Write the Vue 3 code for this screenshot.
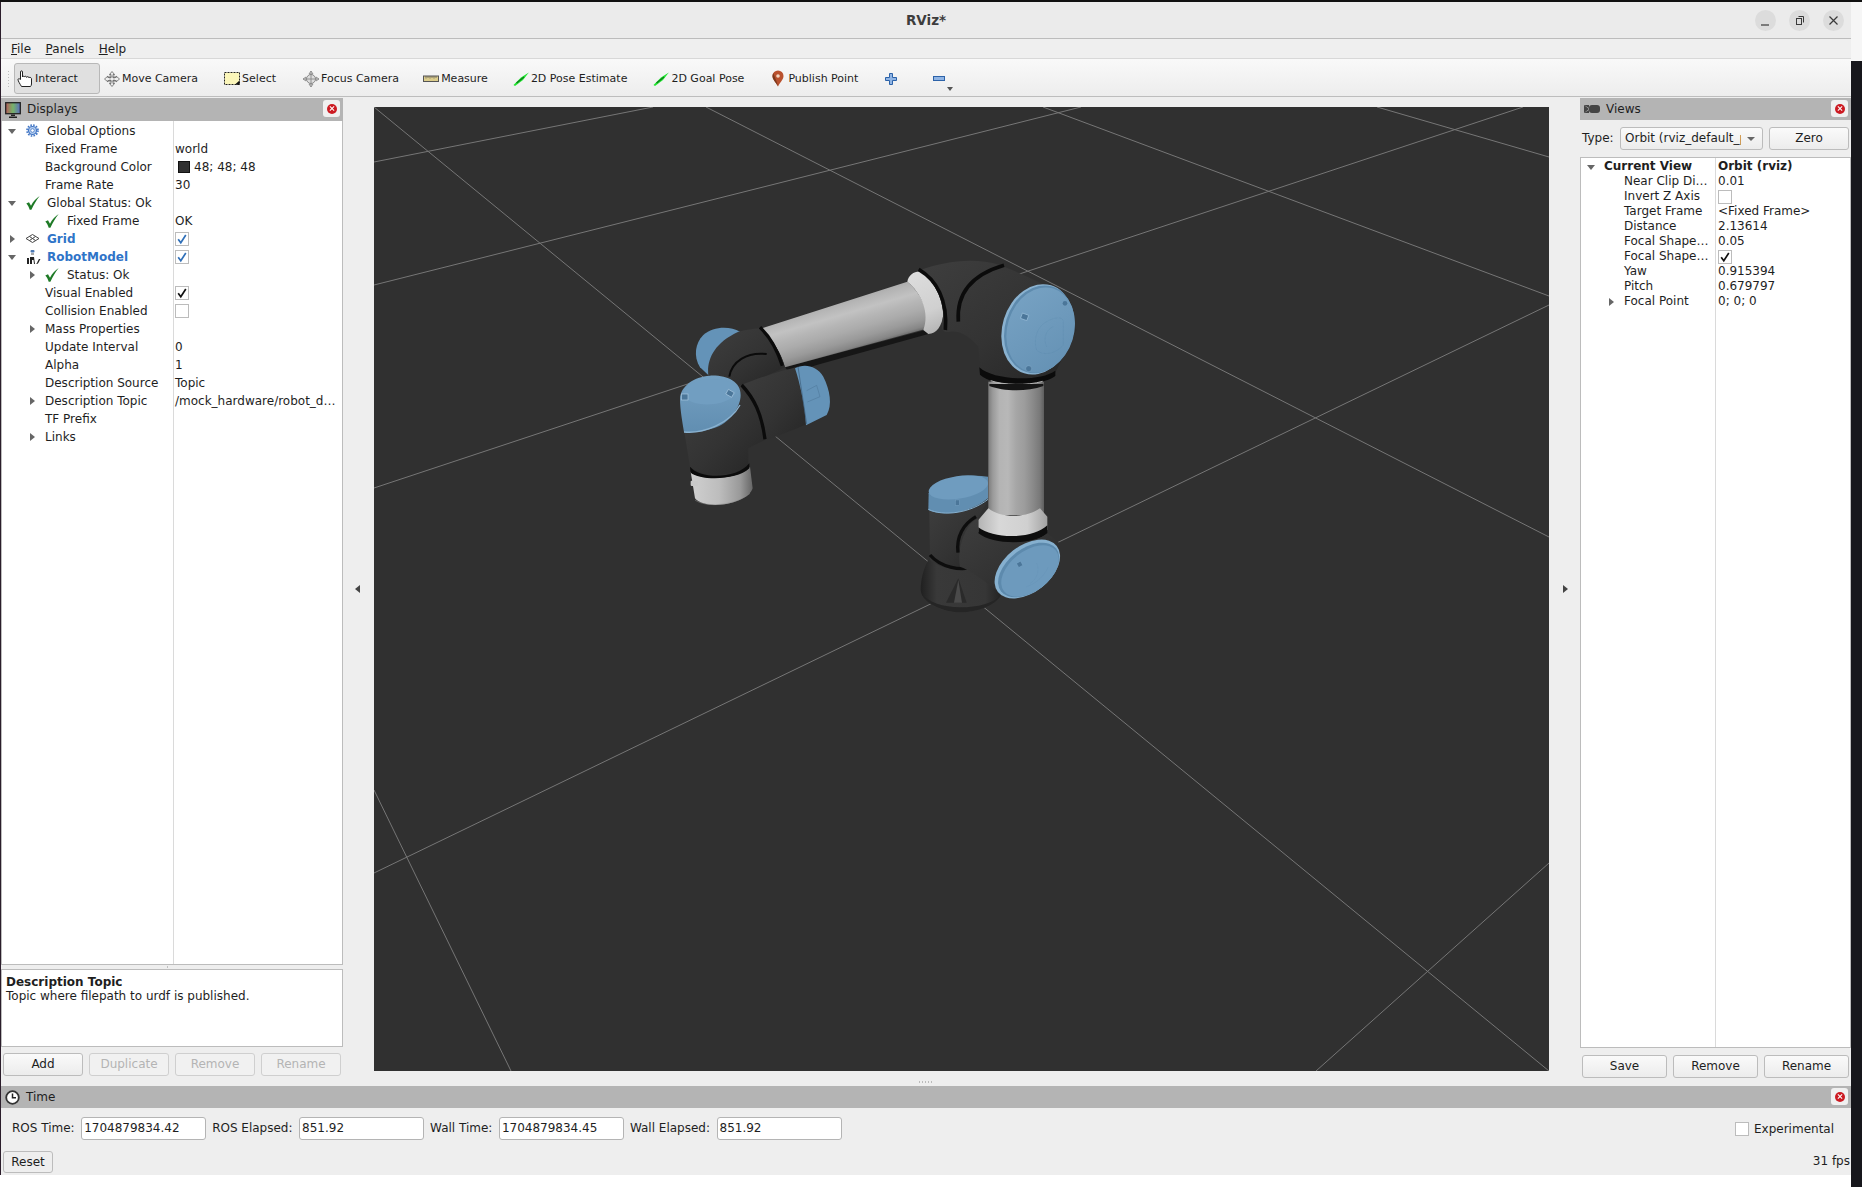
<script setup>
const displayRows = [
  { level: 0, chev: 'down', icon: 'gear', label: 'Global Options' },
  { level: 1, label: 'Fixed Frame', value: 'world' },
  { level: 1, label: 'Background Color', swatch: true, value: '48; 48; 48' },
  { level: 1, label: 'Frame Rate', value: '30' },
  { level: 0, chev: 'down', icon: 'check', label: 'Global Status: Ok' },
  { level: 1, icon: 'check', label: 'Fixed Frame', value: 'OK' },
  { level: 0, chev: 'right', icon: 'grid', label: 'Grid', blue: true, box: 'blue' },
  { level: 0, chev: 'down', icon: 'robot', label: 'RobotModel', blue: true, box: 'blue' },
  { level: 1, chev: 'right', icon: 'check', label: 'Status: Ok' },
  { level: 1, label: 'Visual Enabled', box: 'black' },
  { level: 1, label: 'Collision Enabled', box: 'empty' },
  { level: 1, chev: 'right', label: 'Mass Properties' },
  { level: 1, label: 'Update Interval', value: '0' },
  { level: 1, label: 'Alpha', value: '1' },
  { level: 1, label: 'Description Source', value: 'Topic' },
  { level: 1, chev: 'right', label: 'Description Topic', value: '/mock_hardware/robot_d…' },
  { level: 1, label: 'TF Prefix' },
  { level: 1, chev: 'right', label: 'Links' },
]
const viewRows = [
  { level: 0, chev: 'down', label: 'Current View', value: 'Orbit (rviz)', bold: true },
  { level: 1, label: 'Near Clip Di…', value: '0.01' },
  { level: 1, label: 'Invert Z Axis', box: 'empty' },
  { level: 1, label: 'Target Frame', value: '<Fixed Frame>' },
  { level: 1, label: 'Distance', value: '2.13614' },
  { level: 1, label: 'Focal Shape…', value: '0.05' },
  { level: 1, label: 'Focal Shape…', box: 'black' },
  { level: 1, label: 'Yaw', value: '0.915394' },
  { level: 1, label: 'Pitch', value: '0.679797' },
  { level: 1, chev: 'right', label: 'Focal Point', value: '0; 0; 0' },
]
const gridLines = [
  [374, 107, 1549, 1071],
  [706, 107, 1549, 537],
  [1043, 107, 1549, 296],
  [1377, 107, 1549, 157],
  [374, 790, 511, 1071],
  [374, 162, 653, 107],
  [374, 285, 1081, 107],
  [374, 488, 1523, 107],
  [374, 873, 1549, 305],
  [1316, 1071, 1549, 863],
]
const timeFields = [
  { label: 'ROS Time:', value: '1704879834.42' },
  { label: 'ROS Elapsed:', value: '851.92' },
  { label: 'Wall Time:', value: '1704879834.45' },
  { label: 'Wall Elapsed:', value: '851.92' },
]
</script>

<template>
  <div class="screen">
    <div class="topline"></div>
    <div class="desk">
      <div class="window">
        <header class="titlebar">
          <span class="title">RViz*</span>
          <div class="winbtns">
            <span class="winbtn"><svg width="21" height="21" viewBox="0 0 21 21"><path d="M6 15h8" stroke="#3a3a3a" stroke-width="1.2"/></svg></span>
            <span class="winbtn"><svg width="21" height="21" viewBox="0 0 21 21" fill="none" stroke="#3a3a3a"><rect x="7.5" y="8.5" width="5" height="6"/><path d="M9.5 6.5h5v6"/></svg></span>
            <span class="winbtn"><svg width="21" height="21" viewBox="0 0 21 21"><path d="M6.5 6.5l8 8M14.5 6.5l-8 8" stroke="#3a3a3a" stroke-width="1.2"/></svg></span>
          </div>
        </header>
        <nav class="menubar">
          <span><u>F</u>ile</span>
          <span><u>P</u>anels</span>
          <span><u>H</u>elp</span>
        </nav>
        <div class="toolbar">
          <span class="grip"></span>
          <div class="tool active">
            <svg width="16" height="18" viewBox="0 0 16 18" fill="#fff" stroke="#222" stroke-width="1"><path d="M4.5 16.5C3 14 1 11 1 9.5c0-1 1.5-1 2.5 0V2c0-1.6 2-1.6 2 0v5c0-1 2-1 2 0 0-1 2-1 2 .3 0-1 2.5-.8 2.5.5 0-.8 2.5-.6 2.5 1V14c0 1-.5 2-1 2.5z"/></svg>
            <span>Interact</span>
          </div>
          <div class="tool first">
            <svg width="16" height="16" viewBox="0 0 16 16" fill="#eee" stroke="#666" stroke-width=".8"><path d="M8 .5l2.5 3H9v3h3V5l3.5 3-3.500 3V9.500H9v3h1.500L8 15.500l-2.500-3H7v-3H4V11L.5 8 4 5v1.500h3v-3H5.500z"/><path d="M3 6h10M3 10h10M6 3v10M10 3v10" stroke-width=".5"/></svg>
            <span>Move Camera</span>
          </div>
          <div class="tool">
            <svg width="16" height="16" viewBox="0 0 16 16"><rect x=".5" y="1.500" width="15" height="12" fill="#fbf6ba" stroke="#222" stroke-dasharray="2 1"/><path d="M11 13.500l4.500-4v4.500z" fill="#111"/></svg>
            <span>Select</span>
          </div>
          <div class="tool focus">
            <svg width="18" height="18" viewBox="0 0 18 18" fill="none" stroke="#8b8b8b"><circle cx="9" cy="9" r="4.500" fill="#ddd"/><path d="M9 1v16M1 9h16M9 1l-2 3h4zM9 17l-2-3h4zM1 9l3-2v4zM17 9l-3-2v4z" stroke-width=".9"/></svg>
            <span>Focus Camera</span>
          </div>
          <div class="tool measure">
            <svg width="16" height="16" viewBox="0 0 16 16"><rect x=".5" y="5" width="15" height="5.500" fill="#dccd8c" stroke="#555"/><path d="M3 5v2.500M5 5v2M7 5v2.500M9 5v2M11 5v2.500M13 5v2" stroke="#555" stroke-width=".7"/></svg>
            <span>Measure</span>
          </div>
          <div class="tool">
            <svg width="16" height="16" viewBox="0 0 16 16"><path d="M.5 14L8 6.500 15.800 1.500 10 9 2 15z" fill="#1fe52f"/><path d="M3.500 12L11 6" stroke="#0d7a18" stroke-width="1.200"/></svg>
            <span>2D Pose Estimate</span>
          </div>
          <div class="tool">
            <svg width="16" height="16" viewBox="0 0 16 16"><path d="M.5 14L8 6.500 15.800 1.500 10 9 2 15z" fill="#1fe52f"/><path d="M3.500 12L11 6" stroke="#0d7a18" stroke-width="1.200"/></svg>
            <span>2D Goal Pose</span>
          </div>
          <div class="tool pin">
            <svg width="12" height="17" viewBox="0 0 12 17"><path d="M6 16.500C3.500 11.500.5 9.500.5 6a5.500 5.500 0 0 1 11 0c0 3.500-3 5.500-5.500 10.500z" fill="#b9512e"/><path d="M6 16.500C3.500 11.500.5 9.500.5 6c0-1 .3-2 .8-2.800C3 8 5 11 6 16.500z" fill="#7b3a1e"/><circle cx="6" cy="6" r="1.800" fill="#f2d6c0"/></svg>
            <span>Publish Point</span>
          </div>
          <svg class="plus" width="12" height="12" viewBox="0 0 12 12"><path d="M4.500.5h3v4h4v3h-4v4h-3v-4h-4v-3h4z" fill="#8fb4e4" stroke="#2c62a8"/></svg>
          <svg class="minus" width="12" height="5" viewBox="0 0 12 5"><rect x=".5" y=".5" width="11" height="4" fill="#8fb4e4" stroke="#2c62a8"/></svg>
          <span class="more"></span>
        </div>

        <main class="main">
          <aside class="left">
            <div class="dockhead">
              <svg class="dockicon" width="16" height="16" viewBox="0 0 16 16">
                <defs><linearGradient id="scr" x1="0" x2="1" y1="0" y2="0"><stop offset="0" stop-color="#b55a5a"/><stop offset=".5" stop-color="#76b36a"/><stop offset="1" stop-color="#5a6cc0"/></linearGradient></defs>
                <rect x=".7" y=".7" width="14.600" height="11" fill="url(#scr)" stroke="#222" stroke-width="1.300"/><path d="M6 12.500h4v1.500H6zM4 14.500h8V16H4z" fill="#222"/>
              </svg>
              <span>Displays</span>
              <span class="close"><i></i></span>
            </div>
            <div class="tree">
              <div class="colline display-col"></div>
              <div v-for="(r, i) in displayRows" :key="i" class="row">
                <div class="name" :class="'lv' + r.level">
                  <span class="chevbox"><span v-if="r.chev" class="chev" :class="r.chev"></span></span>
                  <svg v-if="r.icon === 'gear'" class="ico" width="16" height="16" viewBox="0 0 16 16"><circle cx="6.500" cy="7.500" r="4" fill="#b8d0f0" stroke="#3f74c4" stroke-width="1.200"/><circle cx="6.500" cy="7.500" r="5.500" fill="none" stroke="#3f74c4" stroke-width="1.600" stroke-dasharray="1.600 1.280"/><circle cx="6.500" cy="7.500" r="1.800" fill="#fff" stroke="#3f74c4" stroke-width=".8"/></svg>
                  <svg v-else-if="r.icon === 'check'" class="ico" width="16" height="16" viewBox="0 0 16 16"><path d="M.3 8.500L3 7.300 5 10.800C7 6.500 10 3.500 13.700 1 10.500 5 7.800 9.500 5.400 14.700H3.700C3 12.300 1.800 10 .3 8.500z" fill="#1e7a26"/></svg>
                  <svg v-else-if="r.icon === 'grid'" class="ico" width="16" height="16" viewBox="0 0 16 16" fill="none" stroke="#444"><path d="M6.500 3.500l6.500 4-6.500 4L0 7.500zM3.500 5.500l6 4M9.500 5.500l-6 4" stroke-width="1"/></svg>
                  <svg v-else-if="r.icon === 'robot'" class="ico" width="16" height="16" viewBox="0 0 16 16"><rect x="4.500" y="1" width="4" height="2.500" rx="1" fill="#4a78b4"/><rect x="5" y="4" width="3" height="2" fill="#aaa"/><path d="M1 15V9h2v6zM4 15V8h4l1 7H8L7.500 11H6v4zM10 15c1 0 1.500-3 3-5h1.500c-1.500 2-2 5-3.500 5z" fill="#222"/></svg>
                  <span class="label" :class="{ blue: r.blue }">{{ r.label }}</span>
                </div>
                <div class="val">
                  <span v-if="r.swatch" class="swatch"></span>
                  <span v-if="r.box" class="box" :class="r.box">
                    <svg v-if="r.box !== 'empty'" width="14" height="14" viewBox="0 0 14 14"><path d="M3.200 7.200l2.600 3.600 5-7.800" fill="none" :stroke="r.box === 'blue' ? '#2f6fb8' : '#111'" stroke-width="1.700"/></svg>
                  </span>
                  <span v-if="r.value">{{ r.value }}</span>
                </div>
              </div>
            </div>
            <div class="hsplit"></div>
            <div class="desc">
              <b>Description Topic</b>
              <span>Topic where filepath to urdf is published.</span>
            </div>
            <div class="btnrow">
              <button>Add</button>
              <button class="off">Duplicate</button>
              <button class="off">Remove</button>
              <button class="off">Rename</button>
            </div>
          </aside>

          <section class="center">
            <span class="arrow-l"></span>
            <div class="viewport">
              <svg class="scene" width="1175" height="964" viewBox="374 107 1175 964">
                <defs>
                  <linearGradient id="fore" gradientUnits="userSpaceOnUse" x1="555" y1="150" x2="600" y2="305"><stop offset="0" stop-color="#a8a8a8"/><stop offset=".12" stop-color="#b4b4b4"/><stop offset=".3" stop-color="#c2c2c2"/><stop offset=".45" stop-color="#b6b6b6"/><stop offset=".62" stop-color="#ababab"/><stop offset=".8" stop-color="#9a9a9a"/><stop offset=".93" stop-color="#868686"/><stop offset="1" stop-color="#666"/></linearGradient>
                  <linearGradient id="vert" gradientUnits="userSpaceOnUse" x1="1015" y1="0" x2="1182" y2="0"><stop offset="0" stop-color="#7c7c7c"/><stop offset=".08" stop-color="#9a9a9a"/><stop offset=".2" stop-color="#b4b4b4"/><stop offset=".35" stop-color="#b8b8b8"/><stop offset=".5" stop-color="#a6a6a6"/><stop offset=".65" stop-color="#9c9c9c"/><stop offset=".8" stop-color="#8a8a8a"/><stop offset=".93" stop-color="#787878"/><stop offset="1" stop-color="#5e5e5e"/></linearGradient>
                  <linearGradient id="flange" gradientUnits="userSpaceOnUse" x1="985" y1="0" x2="1195" y2="0"><stop offset="0" stop-color="#b4b4b4"/><stop offset=".3" stop-color="#d8d8d8"/><stop offset=".7" stop-color="#d0d0d0"/><stop offset="1" stop-color="#a0a0a0"/></linearGradient>
                  <linearGradient id="flangeF" gradientUnits="userSpaceOnUse" x1="800" y1="70" x2="880" y2="250"><stop offset="0" stop-color="#dcdcdc"/><stop offset=".6" stop-color="#d0d0d0"/><stop offset="1" stop-color="#b0b0b0"/></linearGradient>
                  <linearGradient id="tool" gradientUnits="userSpaceOnUse" x1="125" y1="0" x2="308" y2="0"><stop offset="0" stop-color="#cfcfcf"/><stop offset=".45" stop-color="#bdbdbd"/><stop offset=".8" stop-color="#999"/><stop offset="1" stop-color="#666"/></linearGradient>
                  <linearGradient id="dark" x1="0" x2="1" y1="0" y2="1"><stop offset="0" stop-color="#3e3e3e"/><stop offset=".55" stop-color="#333"/><stop offset="1" stop-color="#252525"/></linearGradient>
                  <linearGradient id="base" gradientUnits="userSpaceOnUse" x1="812" y1="0" x2="1055" y2="0"><stop offset="0" stop-color="#202020"/><stop offset=".2" stop-color="#393939"/><stop offset=".8" stop-color="#363636"/><stop offset="1" stop-color="#222"/></linearGradient>
                  <linearGradient id="cap" x1="0" x2="1" y1="0" y2="1"><stop offset="0" stop-color="#78a3c4"/><stop offset="1" stop-color="#6390b3"/></linearGradient>
                  <linearGradient id="domeTop" x1="0" x2="0" y1="0" y2="1"><stop offset="0" stop-color="#74a0c2"/><stop offset="1" stop-color="#618eb1"/></linearGradient>
                </defs>
                <line v-for="(l, i) in gridLines" :key="i" :x1="l[0]" :y1="l[1]" :x2="l[2]" :y2="l[3]" stroke="#767676" stroke-width="1"/>
                <g transform="translate(650 250) scale(.33333)">
                  <!-- base -->
                  <path d="M838 925C820 955 812 990 812 1020C815 1060 880 1087 930 1087C990 1087 1040 1062 1056 1030L1040 950Z" fill="url(#base)"/>
                  <path d="M814 1030C830 1065 885 1087 930 1087C985 1087 1035 1065 1054 1035C1030 1060 985 1072 930 1072C880 1072 835 1058 814 1030Z" fill="#252525"/>
                  <path d="M925 985L888 1058H950Z" fill="#2a2a2a"/>
                  <path d="M925 990L912 1058H936Z" fill="#4a4a4a"/>
                  <!-- shoulder -->
                  <path d="M838 780C880 800 960 790 1012 755L985 800C945 830 925 880 935 950C900 962 865 950 840 930Z" fill="url(#dark)"/>
                  <path d="M840 915C870 950 930 965 972 950" fill="none" stroke="#0d0d0d" stroke-width="10"/>
                  <path d="M835 780L836 730C850 698 930 668 1014 680V745C960 790 880 800 835 780Z" fill="#618eb1"/>
                  <path d="M835 778C880 800 960 790 1014 748" fill="none" stroke="#86b0cf" stroke-width="3"/>
                  <ellipse cx="925" cy="712" rx="90" ry="34" transform="rotate(-9 925 712)" fill="#6f9cbf"/>
                  <rect x="916" y="750" width="12" height="16" fill="#4b7699" stroke="#86b0d0"/>
                  <!-- vertical arm -->
                  <rect x="1015" y="395" width="167" height="400" fill="url(#vert)"/>
                  <path d="M1015 775L985 810V845C1020 875 1160 875 1192 840V800L1170 775C1130 805 1050 805 1015 775Z" fill="url(#flange)"/>
                  <path d="M985 832C1030 868 1150 868 1192 826V850C1150 888 1030 888 985 852Z" fill="#0d0d0d"/>
                  <path d="M985 850C1030 886 1150 886 1192 850L1228 880L1040 1022C1000 990 960 960 930 950C920 900 945 820 985 805Z" fill="url(#dark)"/>
                  <path d="M978 800C940 822 918 860 924 908" fill="none" stroke="#0d0d0d" stroke-width="10"/>
                  <ellipse cx="1132" cy="957" rx="112" ry="70" transform="rotate(-38 1132 957)" fill="#86b0cf"/>
                  <ellipse cx="1136" cy="960" rx="105" ry="64" transform="rotate(-38 1136 960)" fill="#5d8aad"/>
                  <ellipse cx="1140" cy="963" rx="99" ry="60" transform="rotate(-38 1140 963)" fill="#6d9abd"/>
                  <path d="M1130 1010c30-10 55-35 65-60M1160 940c10 20 0 50-20 60" fill="none" stroke="#5a88ad" stroke-dasharray="2 2"/>
                  <rect x="1102" y="936" width="14" height="14" transform="rotate(-30 1109 943)" fill="#4b7699" stroke="#86b0d0"/>
                  <!-- forearm -->
                  <path d="M150 352C130 320 135 280 160 255C190 228 240 228 270 245L260 310L178 378Z" fill="#6493b8"/>
                  <path d="M405 352L835 238V252L500 345L420 372Z" fill="#161616"/>
                  <path d="M335 235L772 95C815 130 840 190 835 235L405 352C395 310 365 265 335 235Z" fill="url(#fore)"/>
                  <path d="M772 95C775 72 800 60 816 66C852 92 880 150 880 195C876 226 860 252 835 252L820 240C840 190 815 130 772 95Z" fill="url(#flangeF)"/>
                  <!-- elbow -->
                  <path d="M812 60C880 35 970 20 1050 45C1110 70 1170 95 1215 125L1280 240L1215 370C1180 392 1050 400 990 350L985 290C960 260 930 240 900 245C880 250 870 240 880 195C876 130 845 90 812 60Z" fill="url(#dark)"/>
                  <path d="M806 58C860 90 893 150 886 240" fill="none" stroke="#0b0b0b" stroke-width="11"/>
                  <path d="M1062 46C980 70 918 120 925 215" fill="none" stroke="#0b0b0b" stroke-width="11"/>
                  <path d="M988 352C1030 392 1170 396 1216 362V378C1170 412 1030 412 990 374Z" fill="#0b0b0b"/>
                  <path d="M1022 392C1060 405 1130 408 1178 394" fill="none" stroke="#b5b5b5" stroke-width="3"/>
                  <path d="M1018 408C1060 424 1130 426 1180 408V402H1018Z" fill="#151515"/>
                  <ellipse cx="1163" cy="238" rx="106" ry="138" transform="rotate(17 1163 238)" fill="#8ab2d0"/>
                  <ellipse cx="1168" cy="238" rx="103" ry="134" transform="rotate(17 1168 238)" fill="#5e8bae"/>
                  <ellipse cx="1172" cy="240" rx="100" ry="130" transform="rotate(17 1172 240)" fill="url(#cap)"/>
                  <path d="M1160 300c-10-30 0-70 30-85 25-15 50-15 50 0v70c-20 25-60 35-80 15zM1190 290c-10-20-5-50 20-60" fill="none" stroke="#4f7ea4" stroke-dasharray="2 2"/>
                  <rect x="1114" y="192" width="20" height="17" transform="rotate(20 1124 200)" fill="#4b7699" stroke="#9cc0dc" stroke-width="2"/>
                  <circle cx="1245" cy="160" r="7" fill="#4b7699"/>
                  <circle cx="1136" cy="356" r="9" fill="#4b7699" stroke="#9cc0dc"/>
                  <!-- wrist 1 and 2 -->
                  <path d="M175 378C170 330 190 280 265 245C290 240 320 235 335 235C365 265 395 310 405 352L280 410C240 400 200 385 175 378Z" fill="url(#dark)"/>
                  <path d="M330 232C365 265 385 310 397 347" fill="none" stroke="#0b0b0b" stroke-width="10"/>
                  <path d="M238 380C245 335 290 305 350 312" fill="none" stroke="#0b0b0b" stroke-width="6"/>
                  <path d="M268 408C320 385 400 360 445 350L472 522C430 540 350 570 300 592Z" fill="url(#dark)"/>
                  <path d="M435 355C460 340 500 345 520 380C540 420 548 465 530 495L468 526C465 470 450 400 435 355Z" fill="#6493b8"/>
                  <path d="M444 350L470 522" stroke="#3d5e7a" stroke-width="2"/>
                  <path d="M470 422L500 406L510 440L472 456" fill="none" stroke="#4a7396" stroke-width="1.500"/>
                  <!-- wrist 3 -->
                  <path d="M102 540L270 440L280 410C320 450 340 510 345 570L295 595V650C260 680 150 680 120 650Z" fill="url(#dark)"/>
                  <path d="M275 405C312 445 335 490 345 568" fill="none" stroke="#0b0b0b" stroke-width="10"/>
                  <path d="M122 665C150 692 260 692 300 650L308 715C295 760 170 785 135 745Z" fill="url(#tool)"/>
                  <path d="M120 650C150 688 260 688 298 640V655C260 692 150 692 122 668Z" fill="#0b0b0b"/>
                  <rect x="122" y="692" width="22" height="16" rx="3" fill="#c9c9c9"/>
                  <path d="M135 750C170 775 260 765 300 730" fill="none" stroke="#8f8f8f" stroke-width="1.500"/>
                  <path d="M90 445C92 410 130 380 180 377C232 375 272 395 272 435C272 470 240 520 190 535C160 545 130 548 102 546C98 520 90 480 90 445Z" fill="url(#domeTop)"/>
                  <path d="M102 546C160 552 240 520 270 465" fill="none" stroke="#8ab2d0" stroke-width="4"/>
                  <ellipse cx="180" cy="425" rx="80" ry="38" transform="rotate(-4 180 425)" fill="#719ec1"/>
                  <rect x="94" y="432" width="20" height="18" fill="#4b7699" stroke="#a9c8e0" stroke-width="2"/>
                  <rect x="230" y="422" width="20" height="16" transform="rotate(30 240 430)" fill="#4b7699" stroke="#a9c8e0" stroke-width="2"/>
                </g>
              </svg>
            </div>
            <span class="arrow-r"></span>
            <span class="bottomgrip"></span>
          </section>

          <aside class="right">
            <div class="dockhead views">
              <svg class="dockicon" width="16" height="10" viewBox="0 0 16 10"><path d="M0 1l5 3V1h0zM0 9l5-3v3z" fill="#444"/><path d="M0 1v8l5-4z" fill="#444"/><rect x="5" y="1" width="11" height="8" rx="3" fill="#444"/></svg>
              <span>Views</span>
              <span class="close"><i></i></span>
            </div>
            <div class="typerow">
              <label>Type:</label>
              <div class="combo"><span class="combotext">Orbit (rviz_default_plugins/Orbit)</span><span class="comboarrow"></span></div>
              <button class="zero">Zero</button>
            </div>
            <div class="tree vtree">
              <div class="colline view-col"></div>
              <div v-for="(r, i) in viewRows" :key="i" class="row vrow">
                <div class="name vname" :class="'lv' + r.level">
                  <span class="chevbox"><span v-if="r.chev" class="chev" :class="r.chev"></span></span>
                  <span class="label" :class="{ strong: r.bold }">{{ r.label }}</span>
                </div>
                <div class="val vval" :class="{ strong: r.bold }">
                  <span v-if="r.box" class="box" :class="r.box">
                    <svg v-if="r.box !== 'empty'" width="14" height="14" viewBox="0 0 14 14"><path d="M3.200 7.200l2.600 3.600 5-7.800" fill="none" stroke="#111" stroke-width="1.700"/></svg>
                  </span>
                  <span v-if="r.value">{{ r.value }}</span>
                </div>
              </div>
            </div>
            <div class="btnrow vbtns">
              <button>Save</button>
              <button>Remove</button>
              <button>Rename</button>
            </div>
          </aside>
        </main>

        <section class="timepanel">
          <div class="dockhead timehead">
            <svg class="dockicon" width="15" height="15" viewBox="0 0 15 15"><circle cx="7.500" cy="7.500" r="6.300" fill="#fff" stroke="#333" stroke-width="1.800"/><path d="M7.500 3.500v4.300h3.500" fill="none" stroke="#222" stroke-width="1.500"/></svg>
            <span>Time</span>
            <span class="close"><i></i></span>
          </div>
          <div class="timerow">
            <template v-for="f in timeFields" :key="f.label">
              <label>{{ f.label }}</label>
              <div class="field">{{ f.value }}</div>
            </template>
            <span class="box empty exp"></span>
            <label class="explabel">Experimental</label>
          </div>
          <div class="resetrow">
            <button class="reset">Reset</button>
            <span class="fps">31 fps</span>
          </div>
        </section>
      </div>
      <div class="outside">
        <div class="outside-top"></div>
        <div class="outside-rest"></div>
      </div>
    </div>
  </div>
</template>

<style>
html, body { margin: 0; background: #fff; overflow: hidden; }
</style>

<style scoped>
.screen { width: 1862px; height: 1187px; display: flex; flex-direction: column; background: #fff; font: 12px/15px "DejaVu Sans", sans-serif; color: #1e1e1e; overflow: hidden; }
.topline { height: 2px; background: #111; flex: none; }
.desk { flex: 1; display: flex; min-height: 0; }
.window { width: 1850px; height: 1173px; border-left: 1px solid #2b1d2b; box-sizing: content-box; background: #eee; display: flex; flex-direction: column; flex: none; }
.outside { flex: 1; display: flex; flex-direction: column; }
.outside-top { height: 59px; background: #f6f6f6; }
.outside-rest { flex: 1; background: #17171c; }

.titlebar { height: 36px; flex: none; background: #ebebeb; border-bottom: 1px solid #bcbcbc; display: flex; align-items: center; justify-content: center; position: relative; }
.title { font-weight: 700; font-size: 13.500px; color: #3d3d3d; }
.winbtns { position: absolute; top: 7.500px; left: 1754px; display: flex; gap: 13px; }
.winbtn { width: 21px; height: 21px; border-radius: 50%; background: #dcdcdc; display: block; }
.winbtn svg { display: block; }

.menubar { height: 18px; padding-top: 1px; flex: none; background: #efefef; border-bottom: 1px solid #d8d8d8; display: flex; align-items: center; padding-left: 10px; gap: 14.500px; }
.toolbar { height: 35px; padding-top: 2px; flex: none; background: linear-gradient(#f9f9f9, #ededed); border-bottom: 1px solid #bdbdbd; display: flex; align-items: center; padding-left: 13px; gap: 26px; position: relative; font-size: 11px; }
.grip { position: absolute; left: 6px; top: 11px; width: 3px; height: 18px; background-image: radial-gradient(#bdbdbd 35%, transparent 40%); background-size: 3px 3px; }
.tool { display: flex; align-items: center; gap: 2px; height: 31px; }
.tool.active { background: #e0e0e0; border: 1px solid #b8b8b8; border-radius: 3px; padding: 0 21px 0 2px; margin-right: -23px; height: 29px; }
.tool.pin { gap: 4px; margin-left: 2px; }
.tool.first { margin-left: 1px; }
.tool.focus { gap: 1px; margin-right: -2px; }
.tool.measure { margin-right: -1px; }
.plus { margin-left: 1px; }
.minus { margin-left: 10px; }
.more { position: absolute; left: 946px; top: 28px; width: 0; height: 0; border: 3px solid transparent; border-top: 4px solid #555; }

.main { flex: 1; min-height: 0; display: flex; padding-top: 1px; }
.left { width: 342px; flex: none; display: flex; flex-direction: column; }
.right { width: 271px; flex: none; display: flex; flex-direction: column; }
.center { flex: 1; min-width: 0; padding: 9px 31px 15px; position: relative; display: flex; }
.viewport { flex: 1; background: #303030; overflow: hidden; }
.scene { display: block; }
.arrow-l, .arrow-r { position: absolute; top: 487px; width: 0; height: 0; border: 4px solid transparent; }
.arrow-l { left: 8px; border-right: 5px solid #444; }
.arrow-r { right: 8px; border-left: 5px solid #444; }
.bottomgrip { position: absolute; left: 575px; bottom: 3px; width: 16px; height: 2px; background-image: radial-gradient(#bbb 40%, transparent 45%); background-size: 3px 2px; }

.dockhead { height: 23px; flex: none; background: #b4b4b4; display: flex; align-items: center; padding-left: 4px; position: relative; gap: 6px; }
.dockicon { flex: none; }
.close { position: absolute; right: 3px; top: 2px; width: 17px; height: 17px; background: #f0f0f0; border-radius: 3px; display: flex; align-items: center; justify-content: center; }
.close i { width: 10px; height: 10px; border-radius: 50%; background: #cc1a22; position: relative; display: block; }
.close i::before, .close i::after { content: ""; position: absolute; left: 2px; top: 4.500px; width: 6px; height: 1px; background: #fff; transform: rotate(45deg); }
.close i::after { transform: rotate(-45deg); }

.tree { flex: 1; min-height: 0; background: #fff; border: 1px solid #bcbcbc; border-top: 0; position: relative; box-sizing: border-box; padding-top: 1px; }
.colline { position: absolute; top: 0; bottom: 0; width: 1px; background: #dadada; }
.display-col { left: 171px; }
.view-col { left: 134px; }
.row { display: flex; height: 18px; align-items: center; position: relative; }
.name { width: 172px; flex: none; display: flex; align-items: center; box-sizing: border-box; white-space: nowrap; }
.name.lv1 { padding-left: 20px; }
.chevbox { width: 20px; flex: none; display: flex; justify-content: center; align-items: center; height: 14px; }
.chev { width: 0; height: 0; display: block; border: 4px solid transparent; }
.chev.down { border-top: 5px solid #666; border-bottom: 0; margin-top: 1px; }
.chev.right { border-left: 5px solid #666; border-right: 0; }
.ico { flex: none; margin-left: 4px; margin-right: 5px; }
.lv1 .ico { margin-left: 3px; margin-right: 6px; }
.lv1 .chevbox + .label { margin-left: 3px; }
.lv0 .chevbox + .label { margin-left: 3px; }
.label.blue { color: #2f74c8; font-weight: 700; }
.strong { font-weight: 700; }
.val { padding-left: 1px; display: flex; align-items: center; white-space: nowrap; }
.swatch { width: 12px; height: 12px; background: #303030; border: 1px solid #111; box-sizing: border-box; margin: 0 4px 0 3px; }
.box { width: 14px; height: 14px; background: #fff; border: 1px solid #bcbcbc; box-sizing: border-box; display: block; position: relative; }
.box svg { position: absolute; left: -1px; top: -1px; display: block; }

.hsplit { height: 4px; flex: none; background-image: radial-gradient(#c0c0c0 40%, transparent 45%); background-size: 3px 2px; background-repeat: no-repeat; background-position: 165px 1px; }
.desc { height: 78px; flex: none; background: #fff; border: 1px solid #bcbcbc; box-sizing: border-box; padding: 5px 4px; display: flex; flex-direction: column; line-height: 14px; }
.btnrow { display: flex; gap: 6px; padding: 6px 2px 0; flex: none; box-sizing: border-box; }
.left .btnrow { height: 39px; padding-top: 6px; }
button { font: inherit; color: #1e1e1e; height: 23px; flex: 1; min-width: 0; padding: 0; background: linear-gradient(#fafafa, #ececec); border: 1px solid #bcbcbc; border-radius: 3px; }
button.off { color: #b4b4b4; background: #f1f1f1; border-color: #cfcfcf; }

.dockhead.views { height: 22px; }
.typerow { height: 37px; flex: none; display: flex; align-items: center; padding-left: 2px; box-sizing: border-box; padding-bottom: 1px; }
.typerow label { width: 38px; flex: none; }
.combo { width: 143px; height: 23px; flex: none; box-sizing: border-box; border: 1px solid #bcbcbc; border-radius: 3px; background: linear-gradient(#fafafa, #ececec); display: flex; align-items: center; padding-left: 4px; position: relative; }
.combotext { width: 116px; overflow: hidden; white-space: nowrap; }
.comboarrow { position: absolute; right: 7px; top: 9px; width: 0; height: 0; border: 4px solid transparent; border-top: 4px solid #666; border-bottom: 0; }
.zero { flex: none; width: 80px; margin-left: 6px; }
.vtree { border-top: 1px solid #bcbcbc; }
.vrow { height: 15px; }
.vname { width: 134px; }
.vval { padding-left: 3px; }
.vbtns { height: 38px; padding: 7px 2px 0 2px; }

.timepanel { flex: none; height: 89px; display: flex; flex-direction: column; }
.timehead { height: 22px; }
.timerow { height: 39px; flex: none; display: flex; align-items: center; padding: 2px 0 0 11px; box-sizing: border-box; position: relative; }
.timerow label { margin-right: 6.500px; }
.field { width: 125px; height: 23px; box-sizing: border-box; background: #fff; border: 1px solid #b4b4b4; border-radius: 3px; margin-right: 6px; padding: 2px 2px; line-height: 17px; }
.exp { position: absolute; left: 1734px; top: 14px; }
.explabel { position: absolute; left: 1753px; top: 14px; }
.resetrow { flex: 1; display: flex; align-items: flex-start; justify-content: space-between; padding: 4px 0 0 2px; }
.reset { flex: none; width: 50px; height: 22px; background: #eee; }
.fps { margin-top: 3px; margin-right: 1px; }
</style>
